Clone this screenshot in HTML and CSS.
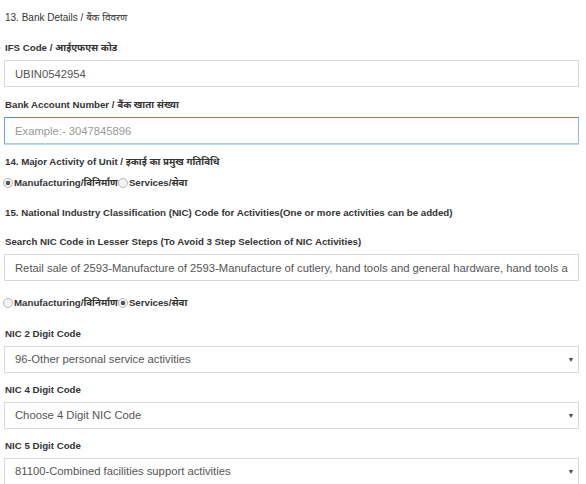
FILE: index.html
```html
<!DOCTYPE html>
<html lang="en">
<head>
    <meta charset="UTF-8">
    <title>Bank Details and NIC Code</title>
    <link rel="stylesheet" href="styles.css">
</head>
<body>
    <div class="form">
        <!-- 13. bank details -->
        <div class="section-title plain">13. Bank Details / बैंक विवरण</div>
        <div class="field first">
            <label class="label">IFS Code / आईएफएस कोड</label>
            <input class="input" type="text" value="UBIN0542954">
        </div>
        <div class="field">
            <label class="label">Bank Account Number / बैंक खाता संख्या</label>
            <input class="input focused" type="text" placeholder="Example:- 3047845896">
        </div>

        <!-- 14. major activity -->
        <div class="section-title major">14. Major Activity of Unit / इकाई का प्रमुख गतिविधि</div>
        <div class="radio-row">
            <input type="radio" name="activity" checked><span>Manufacturing/विनिर्माण</span><input type="radio" name="activity"><span>Services/सेवा</span>
        </div>

        <!-- 15. NIC -->
        <div class="section-title nic">15. National Industry Classification (NIC) Code for Activities(One or more activities can be added)</div>
        <div class="field search">
            <label class="label">Search NIC Code in Lesser Steps (To Avoid 3 Step Selection of NIC Activities)</label>
            <input class="input" type="text" value="Retail sale of 2593-Manufacture of 2593-Manufacture of cutlery, hand tools and general hardware, hand tools and">
        </div>
        <div class="radio-row second">
            <input type="radio" name="nictype"><span>Manufacturing/विनिर्माण</span><input type="radio" name="nictype" checked><span>Services/सेवा</span>
        </div>

        <div class="field nic-2">
            <label class="label">NIC 2 Digit Code</label>
            <div class="select">96-Other personal service activities</div>
        </div>
        <div class="field nic-n">
            <label class="label">NIC 4 Digit Code</label>
            <div class="select">Choose 4 Digit NIC Code</div>
        </div>
        <div class="field nic-n">
            <label class="label">NIC 5 Digit Code</label>
            <div class="select">81100-Combined facilities support activities</div>
        </div>
    </div>
</body>
</html>
```

FILE: styles.css
```css
/* page */
body, html {
    margin: 0;
    padding: 0;
    background: #fff;
    font-family: "Liberation Sans", Arial, "Noto Sans Devanagari", "Lohit Devanagari", sans-serif;
    color: #333;
    overflow: hidden;
}
.form {
    padding: 10px 7px 0 4px;
}
/* titles and labels */
.section-title,
.label {
    display: block;
    font-size: 9.7px;
    line-height: 16px;
    font-weight: bold;
    padding-left: 1px;
    white-space: nowrap;
}
.section-title.plain {
    font-size: 10px;
    font-weight: normal;
}
.section-title.major {
    margin-top: 10px;
}
.section-title.nic {
    margin-top: 14px;
}
.field {
    margin-top: 10px;
}
.field.first {
    margin-top: 14px;
}
.field.search {
    margin-top: 13px;
}
.field.nic-2 {
    margin-top: 15px;
}
.field.nic-n {
    margin-top: 9px;
}
.label {
    margin-bottom: 4px;
}
/* text inputs */
.input,
.select {
    display: block;
    box-sizing: border-box;
    width: 100%;
    height: 27px;
    margin: 0;
    padding: 0 10px;
    border: 1px solid #d8d8d8;
    border-radius: 0;
    background: #fff;
    font-family: "Liberation Sans", Arial, sans-serif;
    font-size: 11.25px;
    color: #555;
    outline: none;
}
.input::placeholder {
    color: #999;
}
.input.focused {
    border-color: #4f8fc6 #8cbde2 #a6cde9 #6aa3d2;
    box-shadow: 0 1px 0 #bcdaf0;
}
/* fake selects */
.select {
    position: relative;
    line-height: 25px;
}
.select::after {
    content: "";
    position: absolute;
    right: 5px;
    top: 11px;
    border-left: 2.5px solid transparent;
    border-right: 2.5px solid transparent;
    border-top: 4px solid #444;
}
/* radios */
.radio-row {
    display: flex;
    align-items: center;
    height: 16px;
    margin: 5px 0 0 -1px;
    font-size: 9.7px;
    font-weight: bold;
    white-space: nowrap;
}
.radio-row.second {
    margin-top: 14px;
}
.radio-row input {
    appearance: none;
    -webkit-appearance: none;
    width: 10px;
    height: 10px;
    margin: 0 1px 0 0;
    border: 1px solid #b8b8b8;
    border-radius: 50%;
    background: #f4f4f4;
}
.radio-row input:checked {
    background: radial-gradient(circle, #555 0, #555 2px, #f4f4f4 2.6px);
}
```
